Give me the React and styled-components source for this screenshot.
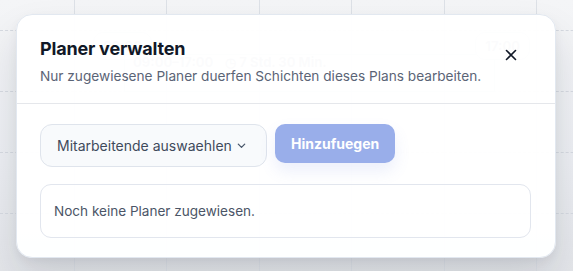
import React from 'react'
import styled, { createGlobalStyle } from 'styled-components'

const Global = createGlobalStyle`
    html, body {
        margin: 0;
        padding: 0;
        background: #f1f3f6;
        font-family: Inter, "Noto Sans", sans-serif;
        -webkit-font-smoothing: antialiased;
    }
`

const Page = styled.div`
    position: relative;
    width: 573px;
    height: 271px;
    overflow: hidden;
    background: linear-gradient(180deg, #f4f5f7 0%, #eceef2 60%, #e4e6ea 100%);
`

const Grid = styled.div`
    display: grid;
    grid-template-columns: 74px repeat(6, 92.4px);
    grid-template-rows: 30px repeat(4, 61px);
    height: 100%;
`

const Cell = styled.div`
    grid-row: ${p => p.$r};
    grid-column: ${p => p.$c};
    border-left: ${p => p.$c === 1 ? 'none' : '1px solid #dde1e7'};
    border-top: ${p => p.$r === 1 ? 'none' : '1px dashed #d6dae1'};
`

const Ghost = styled.div`
    grid-row: 2;
    grid-column: 2 / span 5;
    display: flex;
    align-items: flex-start;
    padding: 2px 6px 0 19px;
    color: #8b97aa;
    font-size: 13px;
    font-weight: 700;
`

const GhostPill = styled.div`
    order: ${p => p.$order};
    border: 1px solid #cbd5e1;
    border-radius: 10px;
    padding: 5px 9px;
    background: #f4f5f7;
`

const GhostBar = styled.div`
    order: 2;
    flex: 1;
    margin: 22px -20px 0 -28px;
    height: 38px;
    border: 1px solid #cbd5e1;
    padding: 0 0 0 8px;
    box-sizing: border-box;
    display: flex;
    gap: 12px;
    line-height: 14px;
`

const Overlay = styled.div`
    position: absolute;
    inset: 0;
    padding: 14px 16px;
    box-sizing: border-box;
`

const Dialog = styled.div`
    width: 540px;
    height: 244px;
    box-sizing: border-box;
    background: rgba(255, 255, 255, 0.965);
    border: 1px solid #e2e8f0;
    border-radius: 16px;
    box-shadow: 0 22px 40px rgba(15, 23, 42, 0.12), 0 4px 10px rgba(15, 23, 42, 0.05);
    display: flex;
    flex-direction: column;
`

const Header = styled.div`
    display: flex;
    justify-content: space-between;
    align-items: flex-start;
    padding: 22px 24px 17px 23px;
    border-bottom: 1px solid #e5e7eb;
`

const Title = styled.h2`
    margin: 0;
    font-size: 18px;
    line-height: 24px;
    font-weight: 700;
    color: #111827;
    letter-spacing: -0.2px;
`

const Subtitle = styled.p`
    margin: 5px 0 0;
    font-size: 13.65px;
    line-height: 20px;
    color: #5b6476;
`

const Close = styled.button`
    border: none;
    background: none;
    padding: 0;
    margin: 12px 14px 0 0;
    width: 12px;
    height: 12px;
    display: flex;
    color: #111827;
`

const Body = styled.div`
    display: flex;
    flex-direction: column;
    gap: 17px;
    padding: 20px 24px 20px 23px;
`

const Row = styled.div`
    display: flex;
    align-items: flex-start;
    gap: 8px;
`

const Select = styled.div`
    width: 227px;
    height: 43px;
    box-sizing: border-box;
    display: flex;
    align-items: center;
    justify-content: space-between;
    padding: 0 19px 0 16px;
    background: #f8fafc;
    border: 1px solid #dfe4ec;
    border-radius: 12px;
    font-size: 14px;
    color: #3f4a5c;
    white-space: nowrap;
`

const Button = styled.button`
    height: 39px;
    padding: 0 16px;
    border: none;
    border-radius: 10px;
    background: #99aeea;
    color: #fff;
    font-family: inherit;
    font-size: 14px;
    font-weight: 700;
    box-shadow: 0 8px 16px rgba(99, 125, 220, 0.12);
`

const Empty = styled.div`
    height: 54px;
    box-sizing: border-box;
    display: flex;
    align-items: center;
    padding: 0 13px;
    border: 1px solid #e2e6ee;
    border-radius: 11px;
    font-size: 13.55px;
    color: #4b5567;
`

const App = () => {
    const cells = []
    for (let r = 1; r <= 5; r++) {
        for (let c = 1; c <= 7; c++) {
            cells.push(<Cell key={r + '-' + c} $r={r} $c={c} />)
        }
    }

    return (
        <Page>
            <Global />
            <Grid>
                {cells}
                <Ghost>
                    <GhostBar>
                        <span>09:00–17:00</span>
                        <span>◷ 7 Std. 30 Min.</span>
                    </GhostBar>
                    <GhostPill $order={1}>09:00</GhostPill>
                    <GhostPill $order={3}>17:00</GhostPill>
                </Ghost>
            </Grid>
            <Overlay>
                <Dialog>
                    <Header>
                        <div>
                            <Title>Planer verwalten</Title>
                            <Subtitle>Nur zugewiesene Planer duerfen Schichten dieses Plans bearbeiten.</Subtitle>
                        </div>
                        <Close aria-label="Schliessen">
                            <svg width="12" height="12" viewBox="0 0 12 12" fill="none" stroke="currentColor" strokeWidth="1.6" strokeLinecap="round">
                                <path d="M1.5 1.5l9 9M10.5 1.5l-9 9" />
                            </svg>
                        </Close>
                    </Header>
                    <Body>
                        <Row>
                            <Select>
                                Mitarbeitende auswaehlen
                                <svg width="11" height="11" viewBox="0 0 12 12" fill="none" stroke="#475569" strokeWidth="1.4" strokeLinecap="round" strokeLinejoin="round">
                                    <path d="M2.5 4.5L6 8l3.5-3.5" />
                                </svg>
                            </Select>
                            <Button>Hinzufuegen</Button>
                        </Row>
                        <Empty>Noch keine Planer zugewiesen.</Empty>
                    </Body>
                </Dialog>
            </Overlay>
        </Page>
    )
}

export default App
